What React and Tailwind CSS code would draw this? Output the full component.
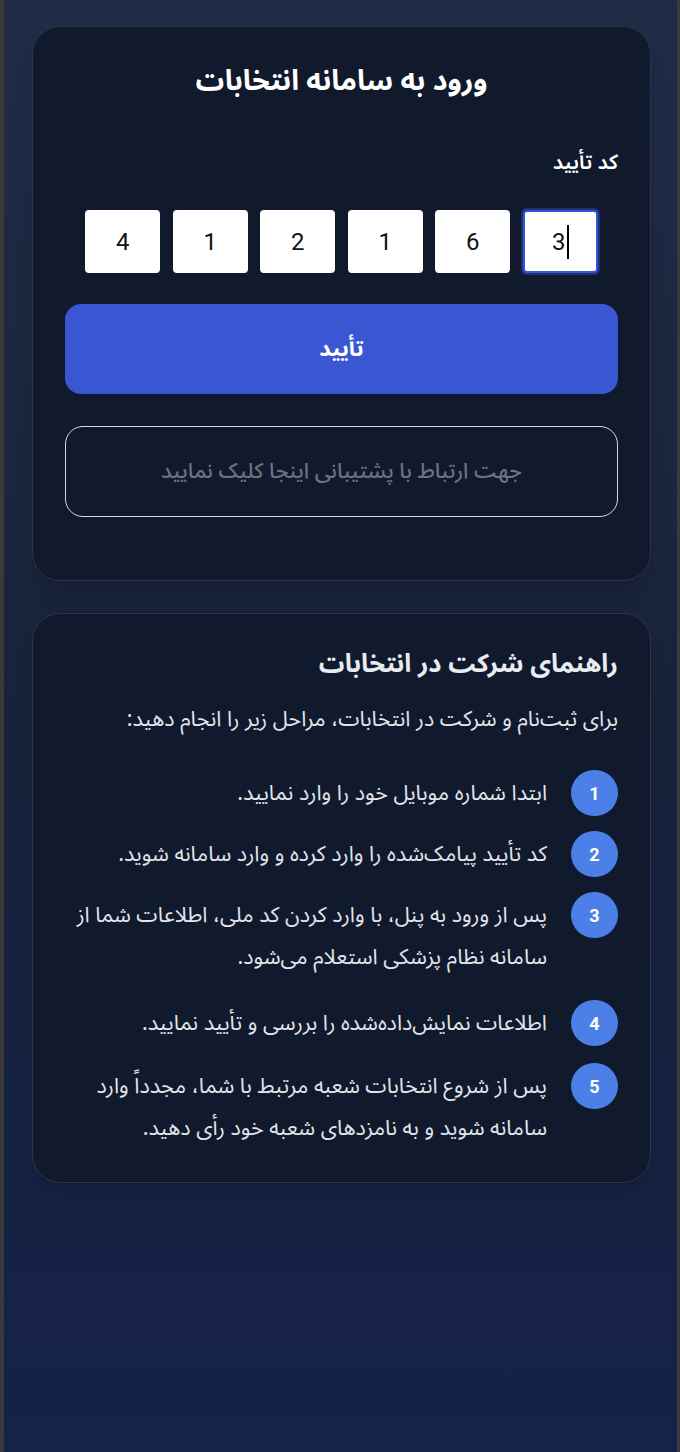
import React, { useState } from "react";

const steps = [
  ["ابتدا شماره موبایل خود را وارد نمایید."],
  ["کد تأیید پیامک‌شده را وارد کرده و وارد سامانه شوید."],
  ["پس از ورود به پنل، با وارد کردن کد ملی، اطلاعات شما از", "سامانه نظام پزشکی استعلام می‌شود."],
  ["اطلاعات نمایش‌داده‌شده را بررسی و تأیید نمایید."],
  ["پس از شروع انتخابات شعبه مرتبط با شما، مجدداً وارد", "سامانه شوید و به نامزدهای شعبه خود رأی دهید."],
];

function App() {
  const [code, setCode] = useState(["3", "6", "1", "2", "1", "4"]);

  return (
    <div
      dir="rtl"
      className="min-h-screen w-full bg-gradient-to-b from-[#202c46] via-[#18223a] to-[#152249] border-l-[4px] border-r-[3px] border-[#3a3a3a] pt-[26px] pb-10 font-['Noto_Sans_Arabic','Vazirmatn','Noto_Sans','DejaVu_Sans',sans-serif]"
    >
      <div className="flex flex-col gap-[32px] pr-[26px] pl-[28px]">
        <div className="bg-[#111a2d] border border-[#2c3548] rounded-[28px] shadow-xl px-8 pt-[36px] pb-[63px]">
          <h1 className="text-center text-white text-[28.5px] font-bold leading-[36px]">ورود به سامانه انتخابات</h1>
          <label className="block mt-[50px] text-white text-[20.5px] font-semibold leading-[28px]">کد تأیید</label>
          <div dir="rtl" className="mt-[33px] flex justify-center gap-[12.5px]">
            {code.map((d, i) => (
              <div
                key={i}
                className={
                  i === 0
                    ? "w-[75px] h-[63px] bg-white rounded-[4px] border-2 border-[#3356d6] ring-2 ring-[#3356d6]/40 flex items-center justify-center text-[24px] text-[#111] font-['Roboto',sans-serif]"
                    : "w-[75px] h-[63px] bg-white rounded-[4px] border-2 border-white flex items-center justify-center text-[24px] text-[#111] font-['Roboto',sans-serif]"
                }
                onClick={() => setCode([...code])}
              >
                <span>{d}</span>
                {i === 0 && <span className="inline-block w-[2px] h-[34px] bg-black ml-[1px] order-first"></span>}
              </div>
            ))}
          </div>
          <button className="mt-[31px] w-full h-[90px] rounded-[16px] bg-[#3a56d2] text-white text-[22px] font-bold">
            تأیید
          </button>
          <button className="mt-[32px] w-full h-[91px] rounded-[18px] border-[1.5px] border-[#d7dbe2] text-[#6b7280] text-[21.5px] font-medium">
            جهت ارتباط با پشتیبانی اینجا کلیک نمایید
          </button>
        </div>

        <div className="bg-[#111a2d] border border-[#2c3548] rounded-[28px] shadow-xl px-8 pt-8 pb-[33px]">
          <h2 className="text-[#e8ebf0] text-[25.5px] font-bold leading-[36px]">راهنمای شرکت در انتخابات</h2>
          <p className="mt-[22px] text-[#e2e5ea] text-[21.5px] leading-[30px]">
            برای ثبت‌نام و شرکت در انتخابات، مراحل زیر را انجام دهید:
          </p>
          <ol className="mt-[36px] flex flex-col gap-[15px]">
            {steps.map((lines, i) => (
              <li key={i} className={i === 2 ? "flex items-start gap-6 pb-[7px]" : i === 3 ? "flex items-start gap-6 pb-[2px]" : "flex items-start gap-6"}>
                <span className="shrink-0 w-[47px] h-[46px] rounded-full bg-[#4c80e8] text-white flex items-center justify-center text-[18px] font-bold font-['Roboto',sans-serif]">
                  {i + 1}
                </span>
                <div className="pt-[2px] text-[#e2e5ea] text-[21.5px] leading-[42px]">
                  {lines.map((l, j) => (
                    <div key={j} className="whitespace-nowrap">{l}</div>
                  ))}
                </div>
              </li>
            ))}
          </ol>
        </div>
      </div>
    </div>
  );
}

export default App;
